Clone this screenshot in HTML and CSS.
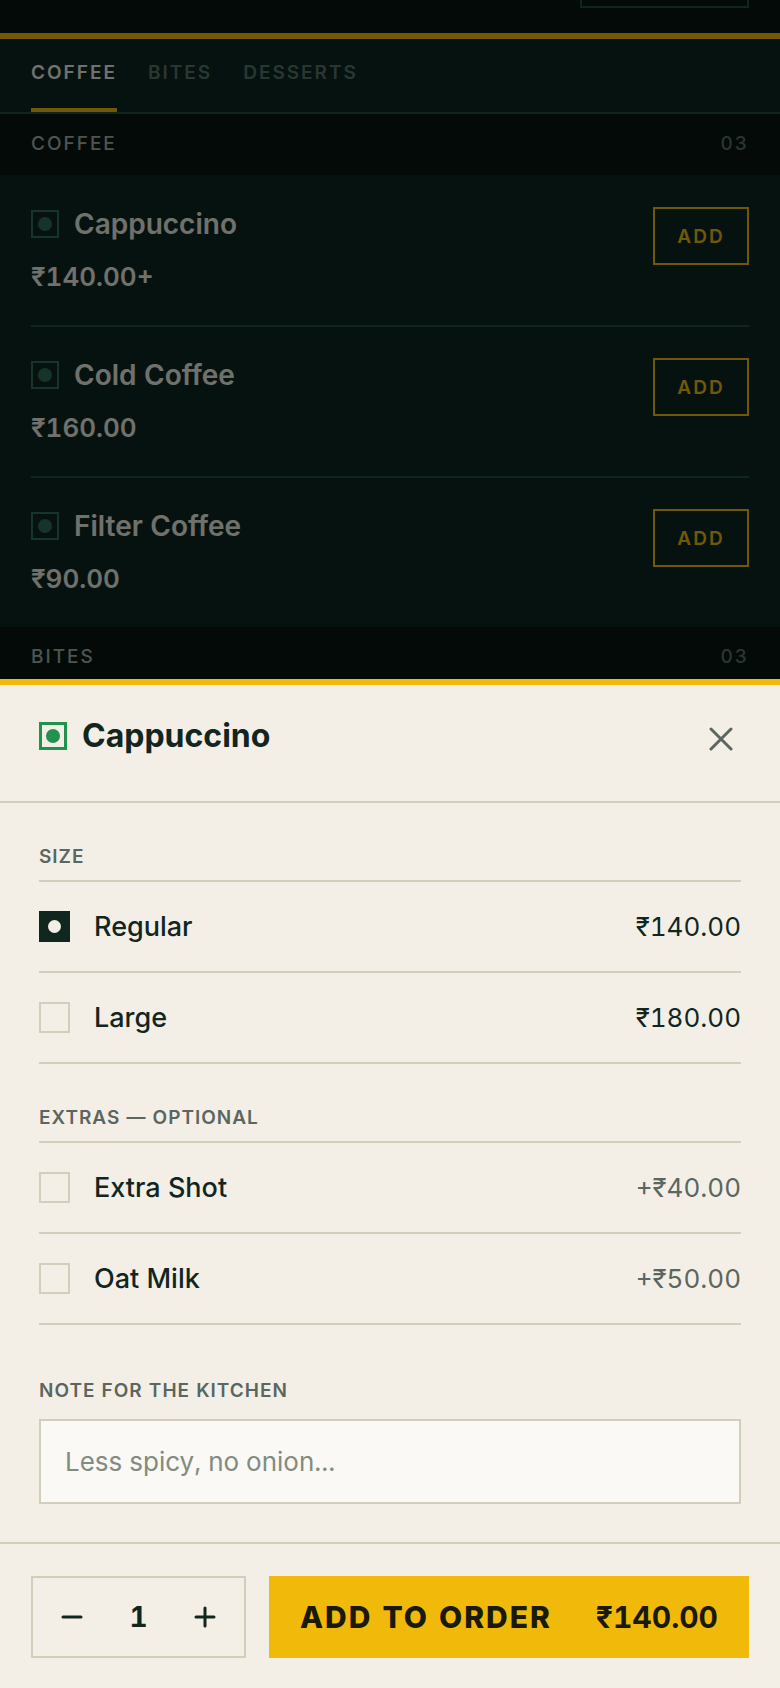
FILE: index.html
```html
<!DOCTYPE html>
<html lang="en">
<head>
    <meta charset="utf-8">
    <meta name="viewport" content="width=device-width, initial-scale=1">
    <title>Menu - Cappuccino</title>
    <link rel="stylesheet" href="styles.css">
</head>
<body>
    <div class="page">
        <header class="page-header">
            <button class="header-button" type="button" aria-label="Table"></button>
        </header>
        <nav class="tabs">
            <a class="tab active" href="#coffee">COFFEE</a>
            <a class="tab" href="#bites">BITES</a>
            <a class="tab" href="#desserts">DESSERTS</a>
        </nav>
        <main>
            <section id="coffee">
                <div class="category">
                    <h2>COFFEE</h2>
                    <span class="count">03</span>
                </div>
                <ul class="items">
                    <li class="item">
                        <div>
                            <h3 class="item-name"><span class="veg"></span>Cappuccino</h3>
                            <p class="item-price">₹140.00+</p>
                        </div>
                        <button class="add-button" type="button">ADD</button>
                    </li>
                    <li class="item">
                        <div>
                            <h3 class="item-name"><span class="veg"></span>Cold Coffee</h3>
                            <p class="item-price">₹160.00</p>
                        </div>
                        <button class="add-button" type="button">ADD</button>
                    </li>
                    <li class="item">
                        <div>
                            <h3 class="item-name"><span class="veg"></span>Filter Coffee</h3>
                            <p class="item-price">₹90.00</p>
                        </div>
                        <button class="add-button" type="button">ADD</button>
                    </li>
                </ul>
            </section>
            <section id="bites">
                <div class="category">
                    <h2>BITES</h2>
                    <span class="count">03</span>
                </div>
            </section>
        </main>
    </div>

    <div class="backdrop"></div>

    <form class="sheet" role="dialog" aria-labelledby="sheetTitle">
        <div class="sheet-header">
            <h2 class="sheet-title" id="sheetTitle"><span class="veg veg-light"></span>Cappuccino</h2>
            <button class="close-button" type="button" aria-label="Close">
                <svg width="24" height="24" viewBox="0 0 24 24" fill="none" stroke="currentColor" stroke-width="3" stroke-linecap="round">
                    <path d="M2 2L22 22M22 2L2 22"/>
                </svg>
            </button>
        </div>

        <div class="sheet-body">
            <section class="group">
                <h3 class="group-label">SIZE</h3>
                <label class="option">
                    <input type="radio" name="size" checked>
                    <span class="option-name">Regular</span>
                    <span class="option-price">₹140.00</span>
                </label>
                <label class="option">
                    <input type="radio" name="size">
                    <span class="option-name">Large</span>
                    <span class="option-price">₹180.00</span>
                </label>
            </section>
            <section class="group">
                <h3 class="group-label">EXTRAS — OPTIONAL</h3>
                <label class="option">
                    <input type="checkbox" name="extra">
                    <span class="option-name">Extra Shot</span>
                    <span class="option-price extra">+₹40.00</span>
                </label>
                <label class="option">
                    <input type="checkbox" name="extra">
                    <span class="option-name">Oat Milk</span>
                    <span class="option-price extra">+₹50.00</span>
                </label>
            </section>
            <div class="note">
                <label for="note">NOTE FOR THE KITCHEN</label>
                <input id="note" type="text" placeholder="Less spicy, no onion...">
            </div>
        </div>

        <div class="sheet-footer">
            <div class="stepper">
                <button type="button" aria-label="Remove one">
                    <svg width="24" height="24" viewBox="0 0 24 24" fill="none" stroke="currentColor" stroke-width="3" stroke-linecap="round">
                        <path d="M3 12H21"/>
                    </svg>
                </button>
                <span class="quantity">1</span>
                <button type="button" aria-label="Add one">
                    <svg width="24" height="24" viewBox="0 0 24 24" fill="none" stroke="currentColor" stroke-width="3" stroke-linecap="round">
                        <path d="M3 12H21M12 3V21"/>
                    </svg>
                </button>
            </div>
            <button class="order-button" type="submit">
                <span class="order-text">ADD TO ORDER</span>
                <span>₹140.00</span>
            </button>
        </div>
    </form>
</body>
</html>
```
FILE: styles.css
```css
* {
    box-sizing: border-box;
}
html, body {
    height: 100%;
}
body {
    margin: 0;
    overflow: hidden;
    background-color: #0a1e1a;
    color: #f4efe6;
    font-family: Inter, "Liberation Sans", sans-serif;
    font-size: 26px;
    font-variant-numeric: tabular-nums;
}
h2, h3, p, ul {
    margin: 0;
    padding: 0;
}
button, input {
    margin: 0;
    font: inherit;
    color: inherit;
}
button {
    padding: 0;
    background: none;
    border: none;
    cursor: pointer;
}

/* Menu behind the sheet */
.page-header {
    display: flex;
    justify-content: flex-end;
    align-items: flex-end;
    height: 39px;
    padding: 0 31px 25px;
    overflow: hidden;
    background-color: #050d0b;
    border-bottom: 6px solid #f4b90a;
}
.header-button {
    flex-shrink: 0;
    width: 169px;
    height: 64px;
    border: 2px solid #23483c;
}
.tabs {
    display: flex;
    gap: 31px;
    padding: 0 31px;
    border-bottom: 2px solid #23483c;
}
.tab {
    padding: 20px 0 21px;
    border-bottom: 4px solid transparent;
    color: #587068;
    font-size: 19px;
    font-weight: 600;
    line-height: 28px;
    letter-spacing: 2px;
    text-decoration: none;
}
.tab.active {
    color: #f4efe6;
    border-color: #f4b90a;
}
.category {
    display: flex;
    justify-content: space-between;
    padding: 16px 31px 17px;
    background-color: #050d0b;
    color: #a5b1aa;
    font-size: 19px;
    font-weight: 500;
    line-height: 28px;
    letter-spacing: 2px;
}
.category h2 {
    font-size: 19px;
    font-weight: 500;
}
.count {
    color: #587068;
}
.items {
    padding: 0 31px;
    list-style: none;
}
.item {
    display: flex;
    justify-content: space-between;
    align-items: flex-start;
    padding: 31px 0;
}
.item:first-child {
    padding-top: 32px;
}
.item + .item {
    border-top: 2px solid #23483c;
}
.item-name {
    display: flex;
    align-items: center;
    gap: 15px;
    font-size: 28px;
    font-weight: 600;
    line-height: 34px;
}
.item-price {
    margin-top: 19px;
    font-weight: 600;
    line-height: 34px;
}
.veg {
    display: flex;
    justify-content: center;
    align-items: center;
    width: 28px;
    height: 28px;
    border: 2px solid #2e6956;
    color: #2e6956;
}
.veg::after {
    content: "";
    width: 14px;
    height: 14px;
    border-radius: 50%;
    background-color: currentColor;
}
.veg-light {
    border-width: 3px;
    border-color: #219150;
    color: #219150;
}
.add-button {
    width: 96px;
    height: 58px;
    border: 2px solid #f4b90a;
    color: #f4b90a;
    font-size: 19px;
    font-weight: 600;
    letter-spacing: 2px;
}
.backdrop {
    position: fixed;
    inset: 0;
    background-color: rgba(4, 10, 8, 0.55);
}

/* Item sheet */
.sheet {
    position: fixed;
    left: 0;
    right: 0;
    bottom: 0;
    background-color: #f4efe6;
    border-top: 6px solid #f1b909;
    color: #10261f;
}
.sheet-header {
    display: flex;
    justify-content: space-between;
    align-items: flex-start;
    padding: 28px 39px 36px;
    border-bottom: 2px solid #d3cebc;
}
.sheet-title {
    display: flex;
    align-items: center;
    gap: 15px;
    font-size: 32px;
    font-weight: 700;
    line-height: 46px;
}
.close-button {
    display: flex;
    justify-content: center;
    align-items: center;
    width: 40px;
    height: 52px;
    color: #5a665f;
}
.sheet-body {
    padding: 0 39px 38px;
}
.group {
    padding-top: 40px;
}
.group-label {
    padding-bottom: 9px;
    border-bottom: 2px solid #d3cebc;
}
.group-label, .note label {
    display: block;
    color: #5a665f;
    font-size: 19px;
    font-weight: 600;
    line-height: 28px;
    letter-spacing: 1px;
}
.option {
    display: flex;
    align-items: center;
    gap: 24px;
    height: 91px;
    border-bottom: 2px solid #d3cebc;
}
.option input {
    display: flex;
    justify-content: center;
    align-items: center;
    width: 31px;
    height: 31px;
    appearance: none;
    border: 2px solid #d3cebc;
}
.option input:checked {
    background-color: #10261f;
    border-color: #10261f;
}
.option input:checked::after {
    content: "";
    width: 13px;
    height: 13px;
    border-radius: 50%;
    background-color: #f4efe6;
}
.option-name {
    flex: 1;
    font-size: 27px;
    font-weight: 500;
}
.option-price.extra {
    color: #5a665f;
}
.note {
    padding-top: 52px;
}
.note input {
    width: 100%;
    height: 85px;
    margin-top: 14px;
    padding: 0 24px;
    background-color: #faf9f5;
    border: 2px solid #d3cebc;
    border-radius: 0;
}
.note input::placeholder {
    color: #838b80;
    opacity: 1;
}
.sheet-footer {
    display: flex;
    gap: 23px;
    padding: 32px 31px 30px;
    border-top: 2px solid #d3cebc;
}
.stepper {
    display: flex;
    align-items: stretch;
    width: 215px;
    height: 82px;
    border: 2px solid #d3cebc;
}
.stepper button {
    display: flex;
    justify-content: center;
    align-items: center;
    width: 78px;
}
.quantity {
    flex: 1;
    align-self: center;
    font-size: 28px;
    font-weight: 700;
    text-align: center;
}
.order-button {
    display: flex;
    flex: 1;
    justify-content: space-between;
    align-items: center;
    padding: 0 31px;
    background-color: #f1b909;
    color: #1a1a0a;
    font-size: 30px;
    font-weight: 700;
}
.order-text {
    font-weight: 800;
    letter-spacing: 2px;
}
```
